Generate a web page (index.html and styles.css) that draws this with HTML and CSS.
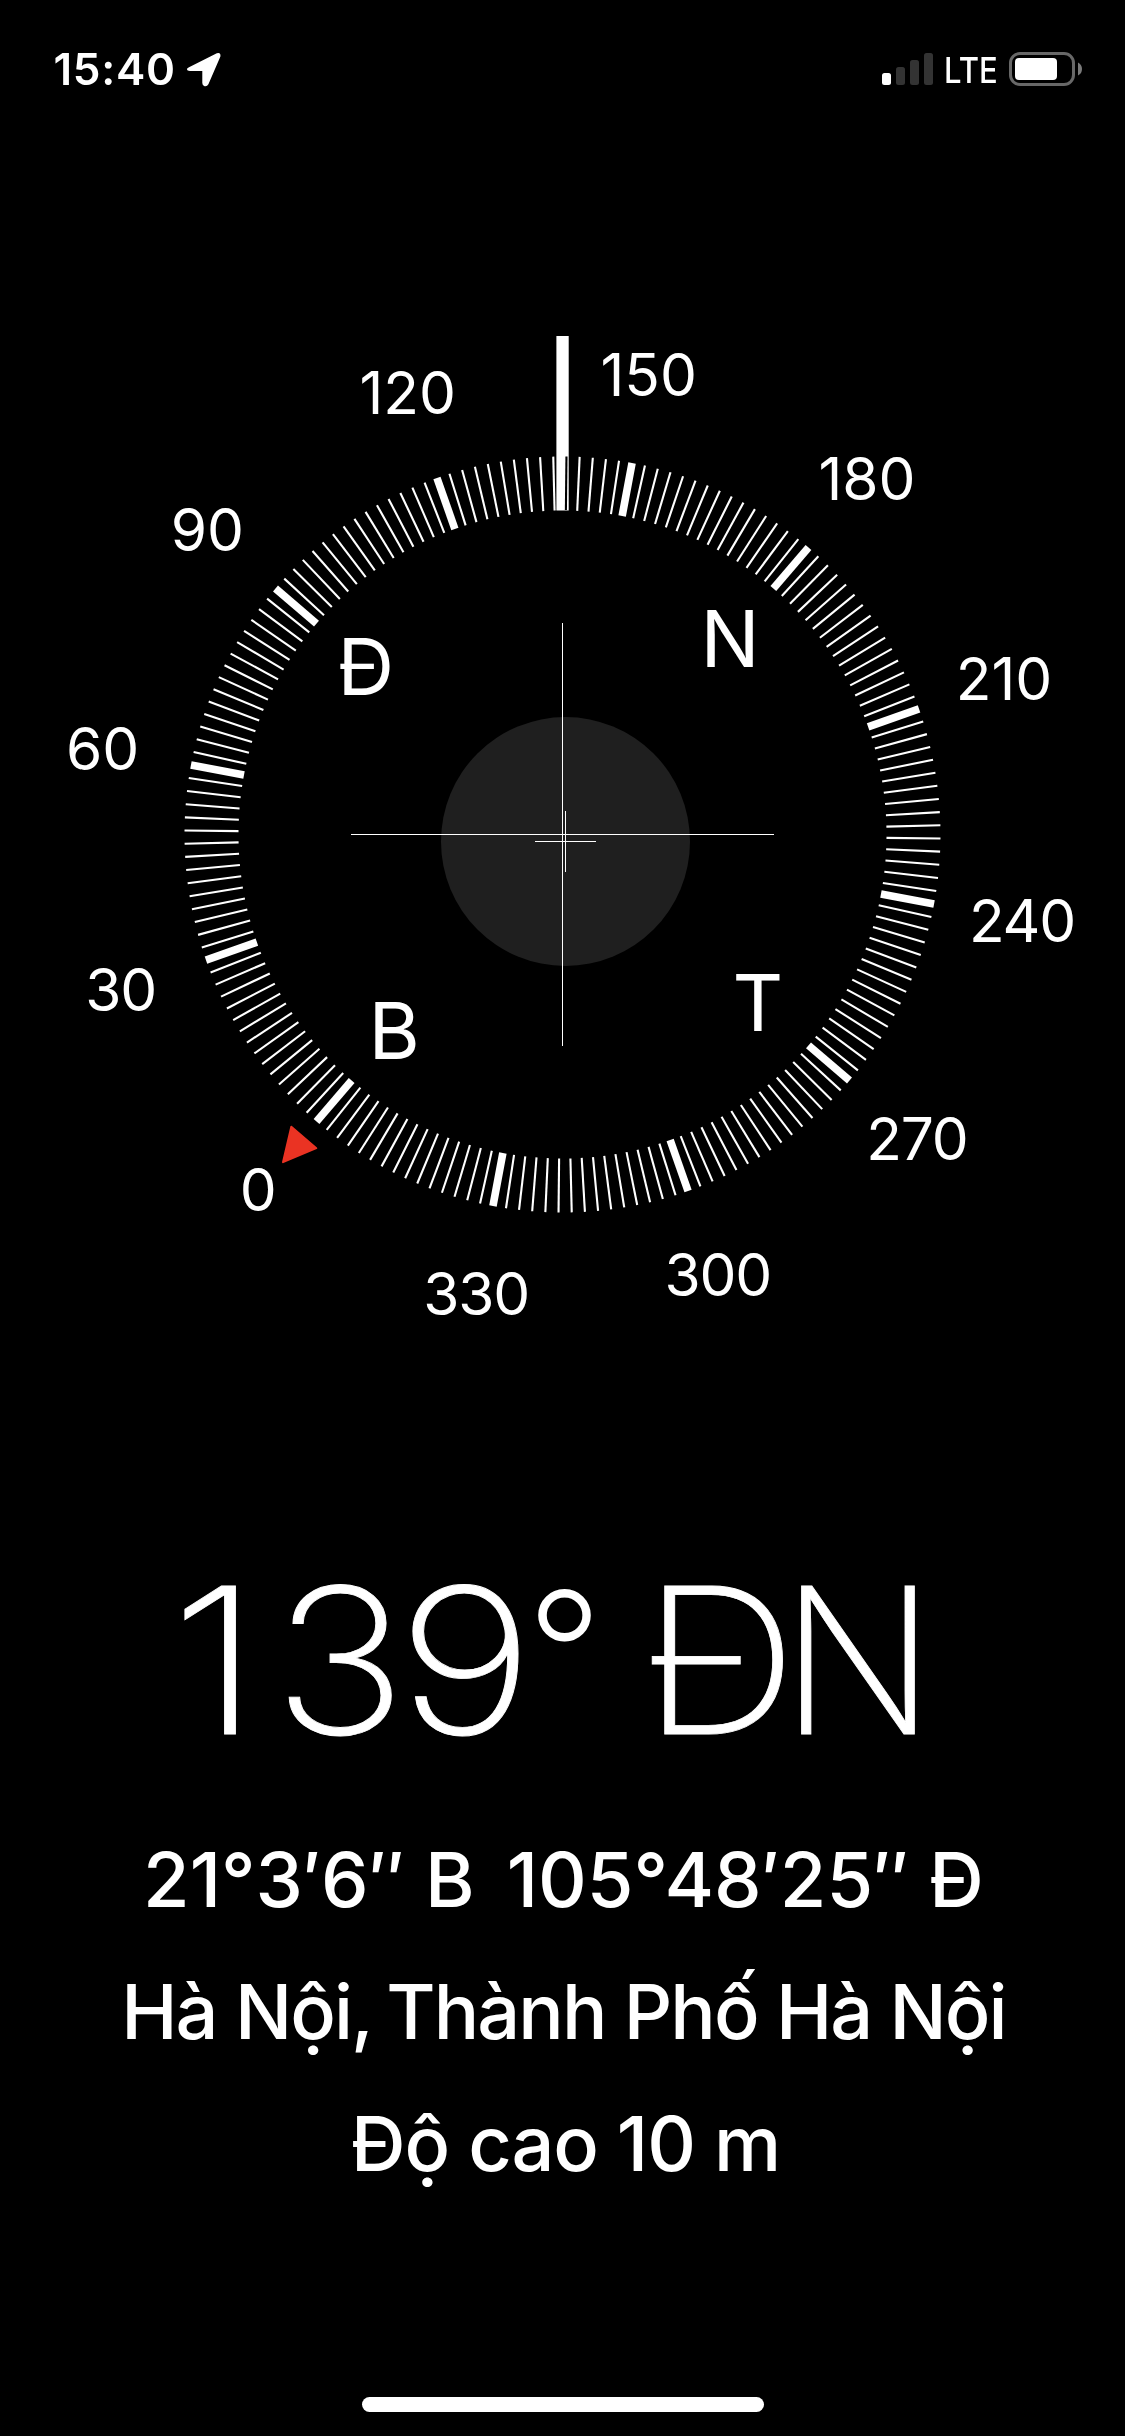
FILE: index.html
```html
<!DOCTYPE html>
<html lang="vi">
<head>
<meta charset="utf-8">
<title>La bàn</title>
<link rel="stylesheet" href="styles.css">
</head>
<body>
<header class="status">
  <div class="status-left">
    <span class="time">15:40</span>
    <svg class="location" width="36" height="36" viewBox="0 0 36 36"><path d="M3 16.200 30.800 2.200Q35 0.800 34.400 5.600L22.400 33.200Q21 35.800 18.600 35.200Q16.300 34.600 16.300 32V20H3.800Q1 19.800 0.900 18.200Q0.900 17.100 3 16.200Z"/></svg>
  </div>
  <div class="status-right">
    <svg class="signal" width="51" height="32" viewBox="0 0 51 32">
      <rect x="0" y="20" width="9" height="12" rx="2.500"/>
      <rect class="off" x="14" y="14" width="9" height="18" rx="2.500"/>
      <rect class="off" x="28" y="7" width="9" height="25" rx="2.500"/>
      <rect class="off" x="42" y="0" width="9" height="32" rx="2.500"/>
    </svg>
    <span class="network">LTE</span>
    <svg class="battery" width="73" height="34" viewBox="0 0 73 34">
      <rect class="case" x="1.500" y="1.500" width="63" height="31" rx="9.500"/>
      <path class="cap" d="M69 10.500Q73 12.500 73 17T69 23.500Z"/>
      <rect x="6" y="6" width="42" height="22" rx="4"/>
    </svg>
  </div>
</header>

<main class="compass">
  <svg class="dial" width="1125" height="1060" viewBox="0 300 1125 1060">
    <circle class="bubble" cx="565.500" cy="841.500" r="124.500"/>
    <g class="cross">
      <path d="M562.500 623V1046M351 834.500H774"/>
      <path d="M565.500 811V872M535 841.500H596"/>
    </g>
    <g id="ticks"></g>
    <rect class="pointer" x="556.400" y="336" width="12.300" height="174.500"/>
    <path class="north" d="M291.300 1126.700 316.300 1148.200 283 1162.200Z"/>
    <g class="degrees">
      <text x="359.500" y="414">120</text>
      <text x="600.500" y="395.500">150</text>
      <text x="818.500" y="500">180</text>
      <text x="955.800" y="699.700">210</text>
      <text class="tight" x="969" y="941.500">240</text>
      <text class="tight" x="866.300" y="1160">270</text>
      <text class="tight" x="664.500" y="1296">300</text>
      <text class="tight" x="423.200" y="1315">330</text>
      <text x="239.700" y="1211">0</text>
      <text class="tight" x="85.200" y="1011">30</text>
      <text x="66" y="769.500">60</text>
      <text x="170.700" y="551">90</text>
    </g>
    <g class="winds">
      <text x="337.500" y="695">Đ</text>
      <text x="700.500" y="667">N</text>
      <text x="732.500" y="1030.700">T</text>
      <text x="368.500" y="1058.700">B</text>
    </g>
  </svg>

  <h1 class="heading"><span class="d1">1</span><span class="d3">3</span><span class="d9">9</span><span class="deg">°</span> <span class="wd">Đ</span>N</h1>
  <p class="line coords"><span>21°3′6″ B</span><span>105°48′25″ Đ</span></p>
  <p class="line place">Hà Nội<span class="comma">,</span> Thành Phố Hà Nội</p>
  <p class="line altitude">Độ cao 10 m</p>
</main>

<div class="home"></div>
<script src="dial.js"></script>
</body>
</html>
```
FILE: styles.css
```css
* { box-sizing: border-box; }

body {
  margin: 0;
  width: 1125px;
  height: 2436px;
  display: flex;
  flex-direction: column;
  overflow: hidden;
  background: #000;
  color: #fff;
  font-family: Inter, "Noto Sans", sans-serif;
}

svg { display: block; flex: none; fill: #fff; }

.status {
  height: 300px;
  padding: 47px 43px 0 53.5px;
  display: flex;
  justify-content: space-between;
  align-items: flex-start;
}
.status-left, .status-right {
  height: 44px;
  display: flex;
  align-items: center;
}
.time {
  font-size: 44px;
  line-height: 44px;
  font-weight: 600;
  letter-spacing: 0.75px;
}
.location { margin-left: 10.3px; }
.signal .off { fill: #333; }
.network {
  width: 50px;
  margin: 3px 15px 0 11px;
  font-size: 35.3px;
  line-height: 44px;
  font-weight: 500;
  transform: scaleX(0.88);
  transform-origin: left;
}
.battery .case { fill: none; stroke: #686868; stroke-width: 3; }
.battery .cap { fill: #7a7a7a; }

.bubble { fill: #1f1f1f; }
.cross { stroke: #fff; stroke-width: 1; }
.minor { stroke: #fff; stroke-width: 2.1; }
.major { stroke: #fff; stroke-width: 7.6; }
.pointer { mix-blend-mode: difference; }
.north { fill: #ea3323; stroke: #ea3323; stroke-width: 2; stroke-linejoin: round; }
.degrees { font-size: 58.6px; }
.winds { font-size: 78.5px; }
.tight { letter-spacing: -1.2px; }

.heading {
  margin: 180px 0 33.7px;
  padding-left: 170px;
  height: 240px;
  font-size: 203px;
  line-height: 240px;
  font-weight: 200;
  white-space: nowrap;
  -webkit-text-stroke: 0.8px #fff;
}
.d1, .d3, .d9, .wd { display: inline-block; transform-origin: left; }
.d1 { margin-right: 25.3px; transform: scaleX(1.17); }
.d3 { margin-right: 4px; transform: scaleX(1.107); }
.d9 { margin-right: 11.6px; transform: scaleX(1.157); }
.deg {
  font-size: 165px;
  line-height: 0;
  vertical-align: 22.7px;
  letter-spacing: -17.6px;
  -webkit-text-stroke-width: 1.8px;
}
.wd { margin-right: -6.8px; transform: scaleX(1.067); }

.line {
  margin: 0;
  font-size: 75.6px;
  line-height: 132px;
  font-weight: 500;
  text-align: center;
  white-space: nowrap;
}
.coords { display: flex; justify-content: center; gap: 32px; padding-left: 2px; }
.place { padding-left: 2px; letter-spacing: -1.9px; }
.comma { letter-spacing: -6px; }
.altitude { padding-left: 6px; letter-spacing: -1.1px; }

.home {
  width: 402px;
  height: 15px;
  margin: auto auto 24px;
  border-radius: 8px;
  background: #fff;
}
```
FILE: dial.js
```javascript
const heading = 139.4;
const cx = 562.5, cy = 834.5, inner = 324, outer = 378;
const group = document.getElementById('ticks');

for (let deg = 0; deg < 360; deg += 2) {
  const tick = document.createElementNS('http://www.w3.org/2000/svg', 'path');
  tick.setAttribute('class', deg % 30 === 0 ? 'major' : 'minor');
  tick.setAttribute('d', `M${cx} ${cy - outer}V${cy - inner}`);
  tick.setAttribute('transform', `rotate(${deg - heading} ${cx} ${cy})`);
  group.appendChild(tick);
}
```
